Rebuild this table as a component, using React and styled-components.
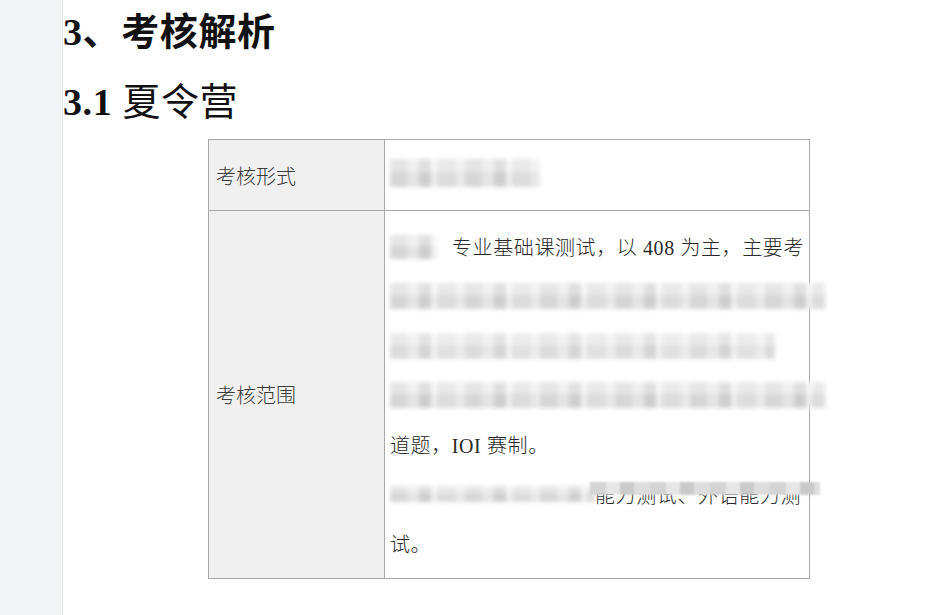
import React from "react";
import styled, { createGlobalStyle } from "styled-components";

const GlobalStyle = createGlobalStyle`
  html, body {
    margin: 0;
    padding: 0;
    background: #ffffff;
  }
  body {
    font-family: "Liberation Serif", "Noto Sans CJK SC", serif;
    color: #222;
  }
`;

const Page = styled.div`
  display: flex;
  width: 939px;
  height: 615px;
  overflow: hidden;
`;

const Sidebar = styled.div`
  flex: 0 0 62px;
  background: #f2f3f5;
  border-right: 1px solid #e4e5e7;
`;

const Content = styled.div`
  flex: 1;
  background: #ffffff;
`;

const Heading = styled.h1`
  margin: ${(p) => p.$margin};
  font-family: "Liberation Serif", "Noto Sans CJK SC", serif;
  font-size: 38px;
  line-height: 46px;
  font-weight: 700;
  color: #111;
  letter-spacing: 0.6px;
`;

const Light = styled.span`
  font-weight: ${(p) => p.$weight || 500};
`;

const Table = styled.table`
  margin: 14px 0 0 145px;
  width: 602px;
  table-layout: fixed;
  border-collapse: collapse;
  font-size: 20px;
  color: #333;
`;

const Col = styled.col`
  width: ${(p) => (p.$w ? `${p.$w}px` : "auto")};
`;

const Label = styled.td`
  height: ${(p) => p.$h}px;
  box-sizing: border-box;
  padding: 0 7px;
  background: #f0f0f0;
  border: 1px solid #a9a9a9;
  vertical-align: middle;
  font-family: "Noto Sans CJK SC", sans-serif;
  font-weight: 300;
  font-size: 20px;
  color: #3a3a3a;
`;

const Cell = styled.td`
  box-sizing: border-box;
  padding: ${(p) => p.$pad};
  border: 1px solid #a9a9a9;
  vertical-align: ${(p) => p.$align || "middle"};
  overflow: visible;
`;

const Line = styled.div`
  position: relative;
  display: flex;
  align-items: center;
  height: 49.5px;
  white-space: nowrap;
  font-family: "Liberation Serif", "Noto Sans CJK SC", serif;
  font-weight: 300;
  letter-spacing: 0.6px;
`;

const Mosaic = styled.span`
  display: inline-block;
  flex: 0 0 auto;
  width: ${(p) => p.$w}px;
  height: ${(p) => p.$h || 24}px;
  margin-right: ${(p) => p.$gap || 0}px;
  background:
    linear-gradient(180deg, rgba(255,255,255,0.3) 0 45%, rgba(0,0,0,0.02) 45% 100%),
    repeating-linear-gradient(
      90deg,
      #dadada 0 17px,
      #e9e9e9 17px 29px,
      #d2d2d2 29px 41px,
      #f3f3f3 41px 47px,
      #e0e0e0 47px 66px,
      #ededed 66px 75px
    );
  filter: blur(2px);
  opacity: ${(p) => p.$o || 1};
`;

const Cover = styled.span`
  position: absolute;
  left: ${(p) => p.$x}px;
  top: 12px;
  width: ${(p) => p.$w}px;
  height: 13px;
  background: repeating-linear-gradient(
    90deg,
    #d4d4d4 0 16px,
    #e6e6e6 16px 30px,
    #cacaca 30px 44px,
    #dddddd 44px 60px
  );
  filter: blur(1px);
`;

const Text = styled.span`
  font-family: "Liberation Serif", "Noto Sans CJK SC", serif;
  color: #2a2a2a;
`;

export default function App() {
  return (
    <Page>
      <GlobalStyle />
      <Sidebar />
      <Content>
        <Heading $margin="9px 0 0 0">
          3、<Light $weight={700}>考核解析</Light>
        </Heading>
        <Heading as="h2" $margin="24px 0 0 0">
          3.1 <Light $weight={400}>夏令营</Light>
        </Heading>
        <Table>
          <colgroup>
            <Col $w={176} />
            <Col />
          </colgroup>
          <tbody>
            <tr>
              <Label $h={71}>考核形式</Label>
              <Cell $pad="0 5px">
                <Mosaic $w={150} $h={28} />
              </Cell>
            </tr>
            <tr>
              <Label $h={367}>考核范围</Label>
              <Cell $pad="11px 5px 9px" $align="top">
                <Line>
                  <Mosaic $w={47} $gap={15} />
                  <Text>专业基础课测试，以 408 为主，主要考</Text>
                </Line>
                <Line>
                  <Mosaic $w={435} $h={26} />
                </Line>
                <Line>
                  <Mosaic $w={385} $h={26} $o={0.85} />
                </Line>
                <Line>
                  <Mosaic $w={435} $h={26} />
                </Line>
                <Line>
                  <Text>道题，IOI 赛制。</Text>
                </Line>
                <Line>
                  <Mosaic $w={205} $h={16} />
                  <Text>能力测试、外语能力测</Text>
                  <Cover $x={200} $w={230} />
                </Line>
                <Line>
                  <Text>试。</Text>
                </Line>
              </Cell>
            </tr>
          </tbody>
        </Table>
      </Content>
    </Page>
  );
}
